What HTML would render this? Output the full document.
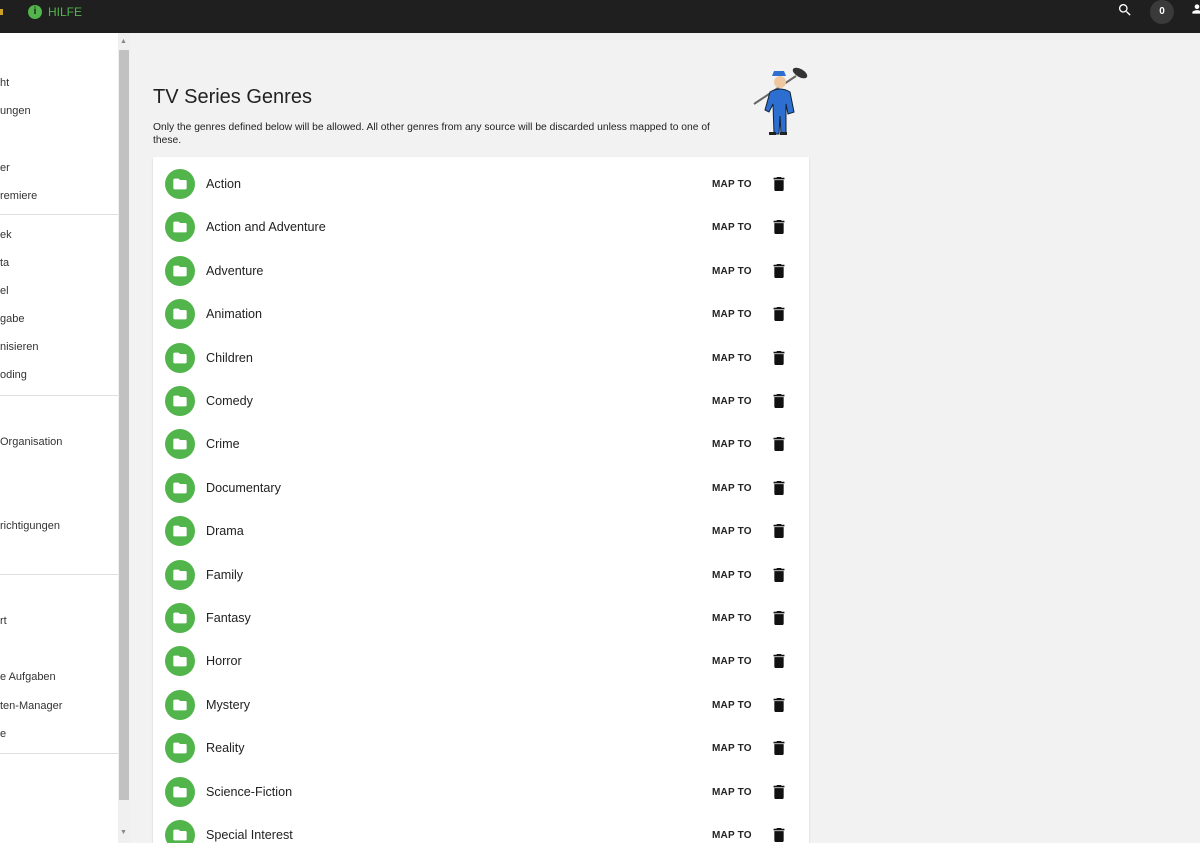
<!DOCTYPE html><html><head><style>
*{margin:0;padding:0;box-sizing:border-box}
html{width:1200px;height:843px;overflow:hidden}
body{width:1200px;height:843px;overflow:hidden;background:#f2f2f2;font-family:"Liberation Sans",Arial,sans-serif;position:relative}
.top{position:absolute;left:0;top:0;width:1200px;height:33px;background:#1f1f1f}
.side{position:absolute;left:0;top:33px;width:118px;height:810px;background:#fff}
.si{position:absolute;left:0;font-size:11px;color:#333;white-space:nowrap}
.div{position:absolute;left:0;width:118px;height:1px;background:#e0e0e0}
.sb{position:absolute;left:118px;top:33px;width:12px;height:810px;background:#f0f0f0}
.thumb{position:absolute;left:119px;top:50px;width:10px;height:750px;background:#c1c1c1}
.card{position:absolute;left:153px;top:157px;width:656px;height:686px;background:#fff;box-shadow:0 1px 2px rgba(0,0,0,.15);overflow:hidden}
.row{position:absolute;left:0;width:656px;height:43px}
.ic{position:absolute;left:12px;top:8px;width:30px;height:30px;border-radius:50%;background:#52b54b}
.ic svg{position:absolute;left:7px;top:7px}
.nm{position:absolute;left:53px;top:16px;font-size:12.6px;color:#222}
.mp{position:absolute;left:559px;top:18px;font-size:10px;font-weight:bold;color:#222;letter-spacing:.2px}
.tr{position:absolute;left:620px;top:16px}
</style></head><body>
<div class="top">
<div style="position:absolute;left:0;top:9px;width:3px;height:6px;background:#c9a227"></div>
<div style="position:absolute;left:28px;top:5px;width:14px;height:14px;border-radius:50%;background:#52b54b;color:#1f1f1f;font-size:10px;font-weight:bold;text-align:center;line-height:14px">i</div>
<div style="position:absolute;left:48px;top:5px;color:#52b54b;font-size:12px">HILFE</div>
<svg style="position:absolute;left:1117px;top:2px" width="16" height="16" viewBox="0 0 24 24"><path fill="#fff" d="M15.5 14h-.8l-.3-.3A6.5 6.5 0 1 0 9.5 16a6.5 6.5 0 0 0 4.2-1.6l.3.3v.8l5 5 1.5-1.5-5-5zm-6 0a4.5 4.5 0 1 1 0-9 4.5 4.5 0 0 1 0 9z"/></svg>
<div style="position:absolute;left:1150px;top:0px;width:24px;height:24px;border-radius:50%;background:#3a3a3a;color:#fff;font-size:10px;font-weight:bold;text-align:center;line-height:24px">0</div>
<svg style="position:absolute;left:1190px;top:2px" width="14" height="14" viewBox="0 0 24 24"><path fill="#fff" d="M12 12a4 4 0 1 0 0-8 4 4 0 0 0 0 8zm0 2c-2.7 0-8 1.3-8 4v2h16v-2c0-2.7-5.3-4-8-4z"/></svg>
</div>
<div class="side">
<div class="si" style="top:44px">ht</div><div class="si" style="top:72px">ungen</div>
<div class="si" style="top:129px">er</div><div class="si" style="top:157px">remiere</div>
<div class="div" style="top:181px"></div>
<div class="si" style="top:196px">ek</div><div class="si" style="top:224px">ta</div><div class="si" style="top:252px">el</div><div class="si" style="top:280px">gabe</div><div class="si" style="top:308px">nisieren</div><div class="si" style="top:336px">oding</div>
<div class="div" style="top:362px"></div>
<div class="si" style="top:403px">Organisation</div><div class="si" style="top:487px">richtigungen</div>
<div class="div" style="top:541px"></div>
<div class="si" style="top:582px">rt</div><div class="si" style="top:638px">e Aufgaben</div><div class="si" style="top:667px">ten-Manager</div><div class="si" style="top:695px">e</div>
<div class="div" style="top:720px"></div>
</div>
<div class="sb"></div><div class="thumb"></div>
<div style="position:absolute;left:120px;top:38px;font-size:7px;color:#888">▲</div>
<div style="position:absolute;left:120px;top:829px;font-size:7px;color:#888">▼</div>
<div style="position:absolute;left:153px;top:86px;font-size:20px;color:#222">TV Series Genres</div>
<div style="position:absolute;left:153px;top:122px;width:585px;font-size:10.3px;line-height:12.5px;color:#222">Only the genres defined below will be allowed. All other genres from any source will be discarded unless mapped to one of these.</div>
<svg style="position:absolute;left:752px;top:64px" width="58" height="74" viewBox="0 0 58 74">
<line x1="2" y1="40" x2="44" y2="12" stroke="#666" stroke-width="2"/>
<ellipse cx="48" cy="9" rx="8" ry="4" fill="#333" transform="rotate(30 48 9)"/>
<circle cx="28" cy="18" r="6" fill="#f0c8a0"/>
<path d="M20 12h14l-2-5h-10z" fill="#2d6fd0"/>
<path d="M18 28q10-6 20 0l4 20-6 2-2-10v30h-5l-1-18-1 18h-5l-1-30-4 8-4-2z" fill="#2d6fd0" stroke="#123" stroke-width="1"/>
<rect x="17" y="68" width="7" height="3" fill="#222"/><rect x="28" y="68" width="7" height="3" fill="#222"/>
</svg>
<div class="card" id="c"></div>
<script>
var g=["Action","Action and Adventure","Adventure","Animation","Children","Comedy","Crime","Documentary","Drama","Family","Fantasy","Horror","Mystery","Reality","Science-Fiction","Special Interest"];
var h="";g.forEach(function(n,i){h+='<div class="row" style="top:'+(4+i*43.4)+'px"><div class="ic"><svg width="16" height="16" viewBox="0 0 24 24"><path fill="#fff" d="M10 4H4a2 2 0 0 0-2 2v12a2 2 0 0 0 2 2h16a2 2 0 0 0 2-2V8a2 2 0 0 0-2-2h-8z"/></svg></div><div class="nm">'+n+'</div><div class="mp">MAP TO</div><svg class="tr" width="12" height="14" viewBox="5 3 14 18"><path fill="#111" d="M6 19a2 2 0 0 0 2 2h8a2 2 0 0 0 2-2V7H6zM19 4h-3.5l-1-1h-5l-1 1H5v2h14z"/></svg></div>'});
document.getElementById("c").innerHTML=h;
</script>
</body></html>
